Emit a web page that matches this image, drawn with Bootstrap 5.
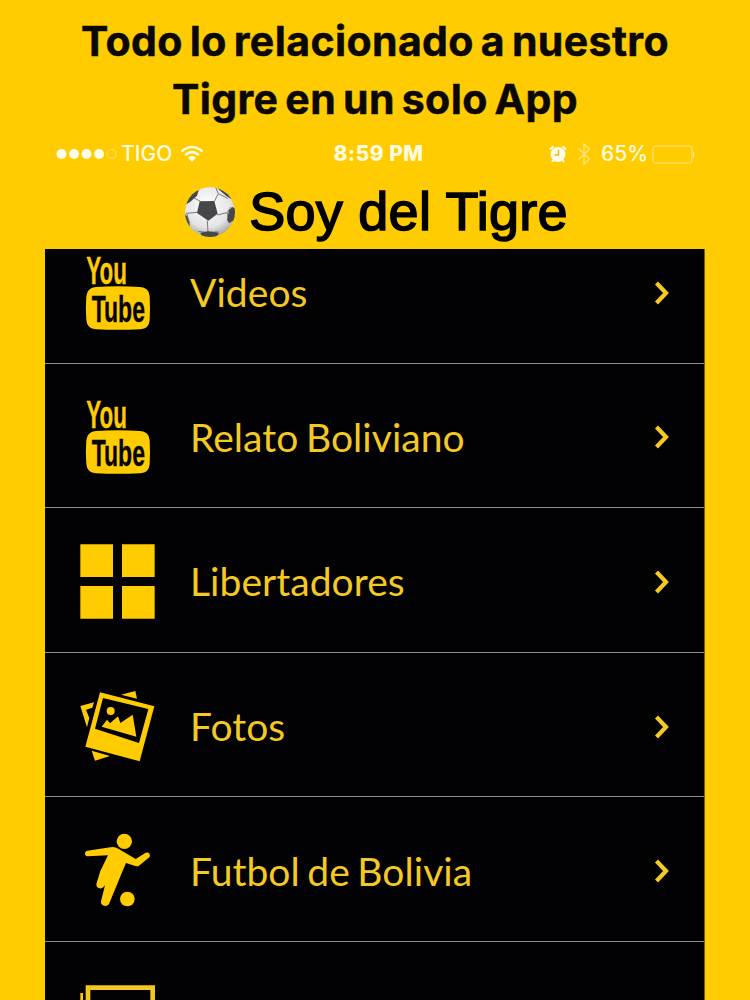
<!DOCTYPE html>
<html lang="es">
<head>
<meta charset="utf-8">
<meta name="viewport" content="width=device-width, initial-scale=1">
<title>Soy del Tigre</title>
<link rel="stylesheet" href="https://cdn.jsdelivr.net/npm/bootstrap@5.3.0/dist/css/bootstrap.min.css">
<style>
:root{--gold:#ffcc02}
body{background:var(--gold);height:1000px;overflow:hidden;color:#0a0800}
.promo{font:700 41px/57.6px Inter,sans-serif;height:134px;padding-top:13px;letter-spacing:.4px;word-spacing:-3.2px;white-space:nowrap;-webkit-text-stroke:.5px #0a0800}
.phone{width:660px;height:866px;margin:0 auto}
.status{height:40px;color:#fffbe0;font:500 21px/40px Inter,sans-serif;padding:0 8px 0 11px;white-space:nowrap}
.side{width:260px}
.clock{font-weight:800;letter-spacing:.45px;padding-left:4px}
.title{height:75px;font:400 54px/75px "Liberation Sans",sans-serif;letter-spacing:.25px;color:#000;-webkit-text-stroke:1.6px #000;padding-left:3px}
.menu{background:#020103;height:751px;overflow:hidden;border-radius:0;border-right:1px solid #6f5c25}
.menu .entry{height:144.6px;flex:none;background:none;color:#f4c922;border:0;border-bottom:1.5px solid #8d8d8f;border-radius:0;padding:0 27px 0 25px;font:400 39px/1 Lato,sans-serif}
.menu .entry:first-child{margin-top:-30px}
.label{margin-left:20px;padding-top:4px;white-space:nowrap;letter-spacing:.05px;word-spacing:-2.5px}
.chevron{width:23px;height:28px;margin-top:4px}
.pic{width:100px;height:100px;fill:var(--gold);flex:none;overflow:visible}
.yt{font-family:"Liberation Sans Narrow","Liberation Sans",sans-serif;font-weight:700;stroke-width:1}
</style>
</head>
<body>
<svg class="d-none">
  <symbol id="tube" viewBox="0 0 300 300" overflow="visible">
    <text class="yt" x="49" y="128" font-size="117" textLength="122" lengthAdjust="spacingAndGlyphs" stroke="#ffcc02">You</text>
    <path d="M78 138Q144 134 210 138Q238 140 239 166Q241 203 239 238Q237 263 211 265Q144 268 78 265Q51 263 49 237Q46 202 49 166Q51 140 78 138Z"/>
    <text class="yt" x="65" y="242" font-size="112" textLength="160" lengthAdjust="spacingAndGlyphs" fill="#080500" stroke="#080500">Tube</text>
  </symbol>
  <symbol id="chev" viewBox="0 0 23 28"><path d="M2.500 4 12 14 2.500 24" fill="none" stroke="#f5ca24" stroke-width="4.200"/></symbol>
</svg>

<h1 class="promo text-center mb-0">Todo lo relacionado a nuestro<br>Tigre en un solo App</h1>

<main class="phone">
  <div class="status d-flex align-items-center justify-content-between">
    <div class="side d-flex align-items-center">
      <svg width="61" height="12" viewBox="0 0 61 12"><g fill="#fffde8"><circle cx="5.5" cy="6" r="5"/><circle cx="18" cy="6" r="5"/><circle cx="30.500" cy="6" r="5"/><circle cx="43" cy="6" r="5"/></g><circle cx="55.500" cy="6" r="4.500" fill="none" stroke="#ffe174"/></svg>
      <span class="ms-1">TIGO</span>
      <svg class="ms-2" width="24" height="18" viewBox="0 0 24 18"><g fill="none" stroke="#fffbe0" stroke-width="2.500"><path d="M1.500 6.500Q12-2.500 22.500 6.500"/><path d="M5.200 10Q12 4.200 18.800 10"/></g><path d="M8 12.500Q12 9.200 16 12.500L12 17Z" fill="#fffbe0"/></svg>
    </div>
    <span class="clock">8:59 PM</span>
    <div class="side d-flex align-items-center justify-content-end">
      <svg width="18" height="18" viewBox="0 0 18 18"><circle cx="9" cy="9.500" r="7.500" fill="#fffde8"/><path d="M1 4.500 4.500 1.300M17 4.500 13.500 1.300M4.500 15 3 17M13.500 15 15 17" stroke="#fffde8" stroke-width="2"/><path d="M9.500 5v5H5.500" fill="none" stroke="#e8bb08" stroke-width="1.400"/></svg>
      <svg class="ms-2 me-2" width="18" height="24" viewBox="-2 0 18 24"><path d="M1.500 6.500 12.500 17 7 22V2l5.500 5L1.500 17.500" fill="none" stroke="#ffe57e" stroke-width="1.300"/></svg>
      <span>65%</span>
      <svg class="ms-1" width="45" height="19" viewBox="0 0 45 19"><rect x="1" y="1" width="39" height="17" rx="2.500" fill="none" stroke="#ffe88a"/><path d="M41 6q3 3.500 0 7z" fill="#ffe88a"/></svg>
    </div>
  </div>

  <div class="title d-flex align-items-center justify-content-center">
    <svg class="flex-shrink-0" style="margin-right:14px" width="50" height="50" viewBox="0 0 150 150">
      <defs><radialGradient id="shade" cx=".45" cy=".35" r=".65"><stop offset="0" stop-color="#fff"/><stop offset=".7" stop-color="#e4e4e4"/><stop offset="1" stop-color="#a9a9a7"/></radialGradient><clipPath id="round"><circle cx="75" cy="75" r="75"/></clipPath></defs>
      <g clip-path="url(#round)"><circle cx="75" cy="75" r="75" fill="url(#shade)"/>
      <path d="M46 43 22 30M88 43 100 20M97 84 126 77M67 101 69 137M36 76 5 79M40 10 22 30M100 20 92 2M100 20 128 34M126 77 138 60M126 77 134 108M69 137 100 134M69 137 40 133M5 79 14 108" fill="none" stroke="#77797b" stroke-width="3"/>
      <g fill="#45474a"><path d="M44 43 88 42 98 80 70 101 36 78Z"/><path d="M28 13 41 10 36 26 16 44 4 52 5 35Z"/><path d="M93-2 104 10 124 27 138 36 145 25Z"/><path d="M132 70 142 60 155 67 150 98 132 108 126 98Z"/><path d="M46 137 70 133 102 137 94 152 52 152Z"/><path d="M0 82 6 88 14 111 12 124 0 110Z"/></g></g>
    </svg>
    <span>Soy del Tigre</span>
  </div>

  <nav class="menu list-group">
    <a class="entry list-group-item d-flex align-items-center" href="#"><svg class="pic"><use href="#tube"/></svg><span class="label">Videos</span><svg class="chevron ms-auto"><use href="#chev"/></svg></a>
    <a class="entry list-group-item d-flex align-items-center" href="#"><svg class="pic"><use href="#tube"/></svg><span class="label">Relato Boliviano</span><svg class="chevron ms-auto"><use href="#chev"/></svg></a>
    <a class="entry list-group-item d-flex align-items-center" href="#"><svg class="pic" viewBox="0 0 300 300"><path d="M31 43h98v98H31zM156 43h98v98h-98zM31 168h98v98H31zM156 168h98v98h-98z"/></svg><span class="label">Libertadores</span><svg class="chevron ms-auto"><use href="#chev"/></svg></a>
    <a class="entry list-group-item d-flex align-items-center" href="#"><svg class="pic" viewBox="0 0 300 300"><g transform="translate(0 16)"><path fill-rule="evenodd" d="M90 36 253 78 209 243 46 199ZM99 53 75 145 207 188 235 86Z"/><circle cx="122" cy="92" r="12"/><path d="M95 139 111 118 120 129 144 108 151 128 188 103 199 169Z"/><path d="M153 43 196 32 201 55ZM31 77 72 66 67 82 48 88 58 113 51 141ZM65 211 120 227 75 241Z"/></g></svg><span class="label">Fotos</span><svg class="chevron ms-auto"><use href="#chev"/></svg></a>
    <a class="entry list-group-item d-flex align-items-center" href="#"><svg class="pic" viewBox="0 0 300 300"><g transform="translate(0 18)"><circle cx="163" cy="49" r="23"/><circle cx="172" cy="222" r="22"/><path d="M52 77 121 67Q134 64 145 71L197 102 226 84C235 78 244 89 238 97L207 122Q203 125 196 123L168 114 155 145 118 235C112 249 91 243 93 229L105 181 102 184C95 196 75 190 80 174L91 138 114 91 54 94C43 94 42 79 52 77Z"/></g></svg><span class="label">Futbol de Bolivia</span><svg class="chevron ms-auto"><use href="#chev"/></svg></a>
    <a class="entry list-group-item d-flex align-items-center" href="#" aria-label="Galería"><svg class="pic" viewBox="0 0 300 300"><path d="M54 71H248V190H54Z" fill="none" stroke="#f2c81e" stroke-width="14"/><path d="M31 87h8v110h190v8H31z"/></svg></a>
  </nav>
</main>
<script src="https://cdn.jsdelivr.net/npm/bootstrap@5.3.0/dist/js/bootstrap.bundle.min.js"></script>
</body>
</html>
